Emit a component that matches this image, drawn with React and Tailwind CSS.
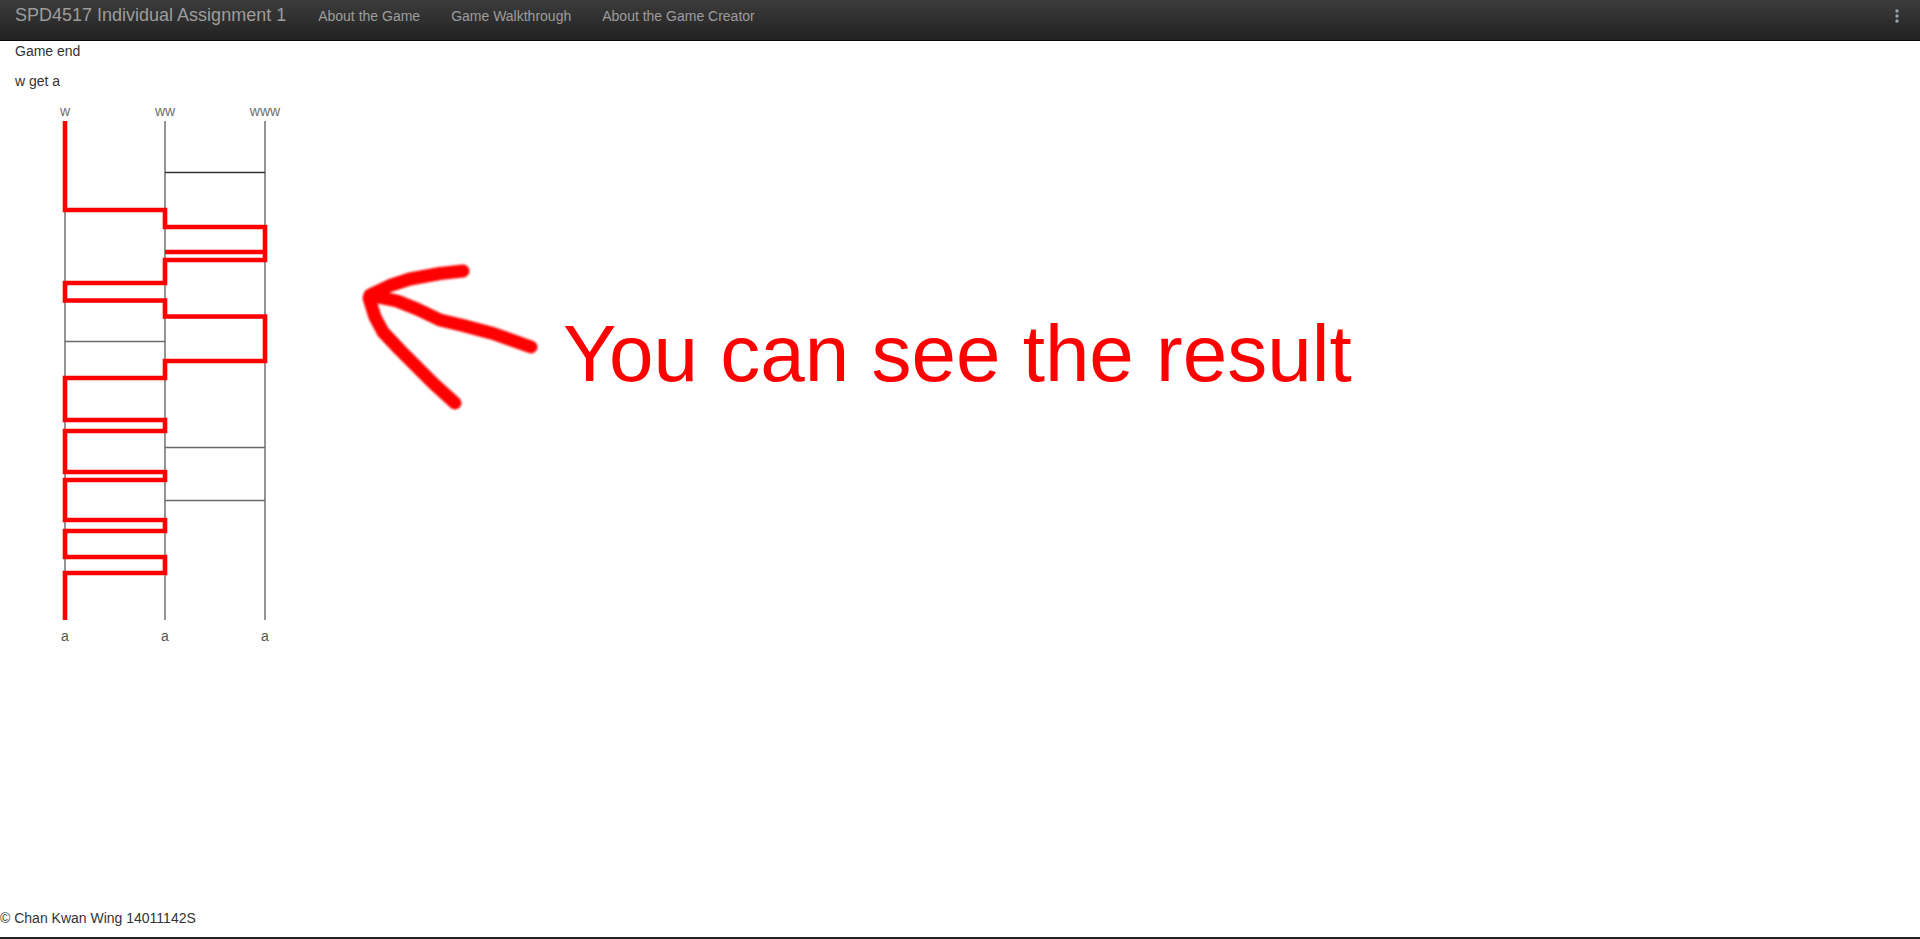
import React from "react";

const links = ["About the Game", "Game Walkthrough", "About the Game Creator"];

// red trace of the path taken down the ladder (page coordinates)
const tracePath =
  "M65,121 V210 H165 V227 H265 V260 H165 V283 H65 V300.5 H165 V316.5 H265 V361 H165 V378 H65 V420 H165 V431 H65 V472 H165 V480 H65 V520 H165 V531 H65 V557 H165 V573 H65 V620";

const rungs = [
  { y: 172.5, x1: 165, x2: 265, color: "#333333" },
  { y: 341.5, x1: 65, x2: 165, color: "#6a6a6a" },
  { y: 447.5, x1: 165, x2: 265, color: "#6a6a6a" },
  { y: 500.5, x1: 165, x2: 265, color: "#6a6a6a" },
];

const columns = [
  { x: 65, top: "w", bottom: "a" },
  { x: 165, top: "ww", bottom: "a" },
  { x: 265, top: "www", bottom: "a" },
];

function Ladder() {
  return (
    <svg width="300" height="560" viewBox="0 91 300 560" className="block">
      {columns.map((c) => (
        <g key={c.x}>
          <text x={c.x} y="116" textAnchor="middle" fontSize="14" fill="#6f6f6f">
            {c.top}
          </text>
          <line x1={c.x} y1="121" x2={c.x} y2="620" stroke="#7a7a7a" strokeWidth="1.6" />
          <text x={c.x} y="641" textAnchor="middle" fontSize="14" fill="#555555">
            {c.bottom}
          </text>
        </g>
      ))}
      {rungs.map((r) => (
        <line key={r.y} x1={r.x1} y1={r.y} x2={r.x2} y2={r.y} stroke={r.color} strokeWidth="1.6" />
      ))}
      <path d={tracePath} fill="none" stroke="#ff0000" strokeWidth="4.6" strokeLinejoin="miter" />
      <path d="M165,252 H265" fill="none" stroke="#ff0000" strokeWidth="4.6" />
    </svg>
  );
}

function Arrow() {
  return (
    <svg
      width="200"
      height="170"
      viewBox="350 250 200 170"
      className="absolute left-[350px] top-[250px]"
    >
      <defs>
        <filter id="soft" x="-20%" y="-20%" width="140%" height="140%">
          <feGaussianBlur stdDeviation="1.3" />
        </filter>
      </defs>
      <g
        fill="none"
        stroke="#ff0000"
        strokeWidth="13"
        strokeLinecap="round"
        strokeLinejoin="round"
        filter="url(#soft)"
      >
        <path d="M463,271 L440,273.5 L410,279 L390,285.5 L370,295" />
        <path d="M373,296 L397,301 L417,309 L440,320 L463,325.5 L493,333.5 L531,347" />
        <path d="M369,298 L375,317 L383,332 L400,350 L417,367 L434,384 L455,403" />
      </g>
    </svg>
  );
}

export default function App() {
  return (
    <div className="relative h-screen flex flex-col bg-white font-['Liberation_Sans',Arial,sans-serif] text-[14px] leading-[20px] text-[#333333]">
      {/* top navbar */}
      <nav className="h-[41px] flex items-start border-b border-[#080808] bg-gradient-to-b from-[#3c3c3c] to-[#222222]">
        <span className="ml-[15px] mt-[5px] text-[18px] leading-[20px] text-[#9d9d9d]">
          SPD4517 Individual Assignment 1
        </span>
        <div className="ml-[32px] mt-[6px] flex gap-[31px]">
          {links.map((l) => (
            <a key={l} className="text-[#9d9d9d]">
              {l}
            </a>
          ))}
        </div>
        <svg width="6" height="16" viewBox="0 0 6 16" className="ml-auto mr-[20px] mt-[8px]">
          <circle cx="3" cy="3" r="1.7" fill="#9aa4ad" />
          <circle cx="3" cy="8" r="1.7" fill="#9aa4ad" />
          <circle cx="3" cy="13" r="1.7" fill="#9aa4ad" />
        </svg>
      </nav>

      {/* game result */}
      <div className="px-[15px]">
        <p className="mb-[10px]">Game end</p>
        <p>w get a</p>
      </div>
      <Ladder />

      {/* annotation drawn over the page */}
      <Arrow />
      <div className="absolute left-[563px] top-[314px] text-[80px] leading-[80px] text-[#ff0000] whitespace-nowrap">
        You can see the result
      </div>

      <footer className="mt-auto pb-[9px] border-b-2 border-[#222222]">
        © Chan Kwan Wing 14011142S
      </footer>
    </div>
  );
}
